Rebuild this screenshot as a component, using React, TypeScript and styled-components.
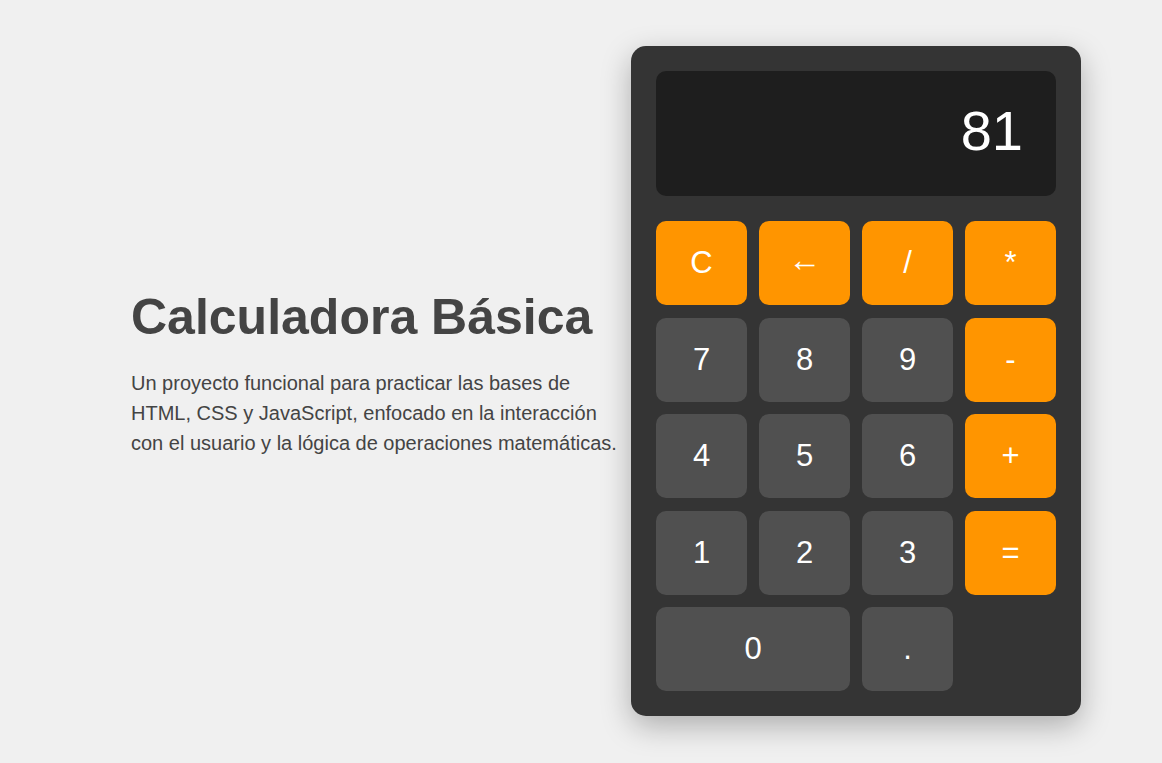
import React from "react";
import styled, { createGlobalStyle } from "styled-components";

const GlobalStyle = createGlobalStyle`
  * { box-sizing: border-box; }
  html, body { margin: 0; padding: 0; }
  body {
    background: #f0f0f0;
    font-family: "Liberation Sans", Arial, sans-serif;
    color: #444;
  }
`;

const Page = styled.main`
  min-height: 100vh;
  display: flex;
  align-items: center;
  padding-bottom: 1px;
`;

const Container = styled.div`
  width: 1000px;
  margin: 0 auto;
  display: flex;
  align-items: center;
  justify-content: flex-end;
`;

const Intro = styled.section`
  flex: 0 0 500px;
  padding-bottom: 15px;
`;

const Title = styled.h1`
  margin: 0 0 22px;
  font-size: 50px;
  line-height: 1.15;
  font-weight: 700;
  color: #444;
`;

const Text = styled.p`
  margin: 0;
  font-size: 20px;
  line-height: 30px;
  color: #444;
`;

const Calculator = styled.div`
  flex: 0 0 450px;
  background: #343434;
  border-radius: 15px;
  padding: 25px;
  box-shadow: 0 10px 30px rgba(0, 0, 0, 0.28);
`;

const Display = styled.div`
  height: 125px;
  margin-bottom: 25px;
  background: #1e1e1e;
  border-radius: 10px;
  padding: 0 33px 4px 25px;
  display: flex;
  align-items: center;
  justify-content: flex-end;
  color: #fff;
  font-size: 56px;
  line-height: 1.15;
`;

const Keys = styled.div`
  display: grid;
  grid-template-columns: repeat(4, 91px);
  grid-auto-rows: 84px;
  column-gap: 12px;
  row-gap: 12.5px;
`;

const Key = styled.button<{ $accent?: boolean; $wide?: boolean }>`
  border: none;
  border-radius: 10px;
  background: ${(p) => (p.$accent ? "#ff9500" : "#505050")};
  color: #fff;
  font-family: "Liberation Sans", Arial, sans-serif;
  font-size: 31px;
  padding: 0;
  display: flex;
  align-items: center;
  justify-content: center;
  cursor: pointer;
  grid-column: ${(p) => (p.$wide ? "span 2" : "auto")};
`;

const Arrow = styled.span`
  display: inline-block;
  font-size: 33px;
  transform: translateY(-3px);
`;

const keys: { label: string; accent?: boolean; wide?: boolean }[] = [
  { label: "C", accent: true },
  { label: "←", accent: true },
  { label: "/", accent: true },
  { label: "*", accent: true },
  { label: "7" },
  { label: "8" },
  { label: "9" },
  { label: "-", accent: true },
  { label: "4" },
  { label: "5" },
  { label: "6" },
  { label: "+", accent: true },
  { label: "1" },
  { label: "2" },
  { label: "3" },
  { label: "=", accent: true },
  { label: "0", wide: true },
  { label: "." },
];

export default function App() {
  return (
    <>
      <GlobalStyle />
      <Page>
        <Container>
          <Intro>
            <Title>Calculadora Básica</Title>
            <Text>
              Un proyecto funcional para practicar las bases de HTML, CSS y
              JavaScript, enfocado en la interacción con el usuario y la lógica
              de operaciones matemáticas.
            </Text>
          </Intro>
          <Calculator>
            <Display>81</Display>
            <Keys>
              {keys.map((k) => (
                <Key key={k.label} $accent={k.accent} $wide={k.wide}>
                  {k.label === "←" ? <Arrow>{k.label}</Arrow> : k.label}
                </Key>
              ))}
            </Keys>
          </Calculator>
        </Container>
      </Page>
    </>
  );
}
